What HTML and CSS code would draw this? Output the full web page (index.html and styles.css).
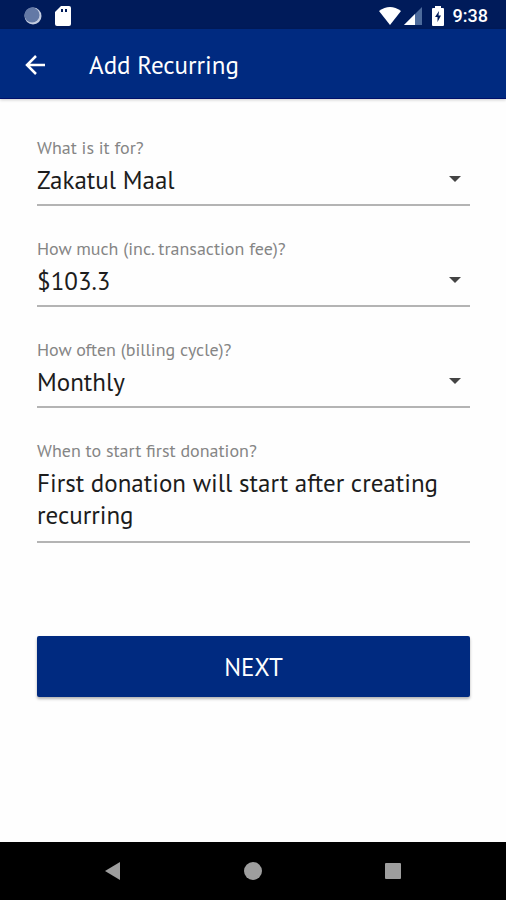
FILE: index.html
```
<!DOCTYPE html>
<html lang="en">
<head>
  <meta charset="UTF-8" />
  <meta name="viewport" content="width=device-width, initial-scale=1.0"/>
  <title>Add Recurring</title>
  <link rel="stylesheet" href="styles.css">
</head>
<body>
  <div class="status-bar">
    <svg width="18" height="18" viewBox="0 0 18 18">
      <circle cx="9" cy="9" r="8.5" fill="#c3cce0"/>
      <circle cx="8" cy="8" r="7.5" fill="#6379a6"/>
    </svg>
    <svg width="16" height="20" viewBox="0 0 16 20">
      <path d="M6 0h8a2 2 0 0 1 2 2v16a2 2 0 0 1-2 2H2a2 2 0 0 1-2-2V6z" fill="#fff"/>
      <path d="M6 3h2v3H6zM10 3h2v3h-2z" fill="#001b5a"/>
    </svg>
    <div class="status-right">
      <svg width="22" height="18" viewBox="0 0 22 18">
        <path d="M0 4Q11-4 22 4L11 18z" fill="#fff"/>
      </svg>
      <svg class="signal" width="18" height="18" viewBox="0 0 18 18">
        <path d="M18 0v18H0z" fill="#4d6b9c"/>
        <path d="M11 7v11H0z" fill="#fff"/>
      </svg>
      <svg class="battery" width="12" height="20" viewBox="0 0 12 20">
        <path d="M3 2V0h6v2h2a1 1 0 0 1 1 1v16a1 1 0 0 1-1 1H1a1 1 0 0 1-1-1V3a1 1 0 0 1 1-1z" fill="#fff"/>
        <path d="M7 5L3 11h2.5v5L9 9.5H6.500z" fill="#001b5a"/>
      </svg>
      <span class="clock">9:38</span>
    </div>
  </div>

  <header class="app-bar">
    <button class="back" type="button" aria-label="Back">
      <svg width="22" height="20" viewBox="0 0 22 20" fill="none" stroke="#fff" stroke-width="2.5">
        <path d="M20 10H3M11 1L2 10l9 9"/>
      </svg>
    </button>
    <h1>Add Recurring</h1>
  </header>

  <form class="form">
    <div class="field">
      <label for="purpose">What is it for?</label>
      <div class="select">
        <select id="purpose" name="purpose">
          <option>Zakatul Maal</option>
        </select>
      </div>
    </div>

    <div class="field">
      <label for="amount">How much (inc. transaction fee)?</label>
      <div class="select">
        <select id="amount" name="amount">
          <option>$103.3</option>
        </select>
      </div>
    </div>

    <div class="field">
      <label for="cycle">How often (billing cycle)?</label>
      <div class="select">
        <select id="cycle" name="cycle">
          <option>Monthly</option>
        </select>
      </div>
    </div>

    <div class="field">
      <label for="start">When to start first donation?</label>
      <textarea id="start" name="start" rows="2" readonly>First donation will start after creating recurring</textarea>
    </div>

    <button class="next" type="button">NEXT</button>
  </form>

  <nav class="nav-bar">
    <button type="button" aria-label="Back">
      <svg width="18" height="18" viewBox="0 0 18 18"><path d="M16 0v18L1 9z" fill="#9e9e9e"/></svg>
    </button>
    <button type="button" aria-label="Home">
      <svg width="18" height="18" viewBox="0 0 18 18"><circle cx="9" cy="9" r="9" fill="#9e9e9e"/></svg>
    </button>
    <button type="button" aria-label="Recent apps">
      <svg width="18" height="18" viewBox="0 0 18 18"><rect x="1" y="1" width="16" height="16" rx="1" fill="#9e9e9e"/></svg>
    </button>
  </nav>
</body>
</html>
```
FILE: styles.css
```
* {
  box-sizing: border-box;
}

body {
  margin: 0;
  min-height: 100vh;
  display: flex;
  flex-direction: column;
  background: #fefefe;
  color: #1c1c1c;
  font-family: "PT Sans", "Noto Sans", sans-serif;
}

svg {
  display: block;
}

button {
  border: none;
  padding: 0;
  background: none;
  font-family: inherit;
  cursor: pointer;
}

.status-bar {
  display: flex;
  align-items: center;
  gap: 13px;
  height: 29px;
  padding: 2px 18px 0 24px;
  background: #001b5a;
  color: #fff;
}

.status-right {
  display: flex;
  align-items: center;
  margin-left: auto;
}

.signal {
  margin-left: 3px;
}

.battery {
  margin: 0 9px 0 10px;
}

.clock {
  font-family: Roboto, sans-serif;
  font-size: 18px;
  font-weight: 500;
  line-height: 20px;
}

.app-bar {
  display: flex;
  align-items: center;
  gap: 42px;
  height: 70px;
  padding: 2px 25px 0;
  background: #002a80;
  border-bottom: 1px solid #00106a;
  box-shadow: 0 1px 3px rgba(0, 0, 0, 0.2);
}

h1 {
  margin: 0;
  color: #fff;
  font-size: 25px;
  font-weight: normal;
  line-height: 32px;
}

.form {
  flex: 1;
  display: flex;
  flex-direction: column;
  gap: 33px;
  padding: 39px 36px 33px 37px;
}

.field {
  display: flex;
  flex-direction: column;
  gap: 6px;
}

label {
  color: #858585;
  font-size: 18px;
  line-height: 20px;
}

.select {
  display: grid;
  align-items: center;
}

.select select,
.select::after {
  grid-area: 1 / 1;
}

.select::after {
  content: "";
  justify-self: end;
  margin: 0 9px 12px 0;
  border: 6px solid transparent;
  border-top-color: #444;
  border-bottom: none;
  pointer-events: none;
}

select,
textarea {
  appearance: none;
  display: block;
  width: 100%;
  margin: 0;
  padding: 0 0 8px;
  border: none;
  border-bottom: 2px solid #b4b4b4;
  border-radius: 0;
  outline: none;
  background: transparent;
  color: inherit;
  font-family: inherit;
  font-size: 25px;
  line-height: 32px;
}

textarea {
  padding-bottom: 10px;
  resize: none;
  overflow: hidden;
}

.next {
  height: 61px;
  margin-top: 60px;
  border-radius: 2px;
  background: #002a80;
  box-shadow: 0 2px 3px rgba(0, 0, 0, 0.3);
  color: #fff;
  font-size: 25px;
}

.nav-bar {
  display: flex;
  justify-content: center;
  align-items: center;
  gap: 122px;
  height: 58px;
  background: #000;
}
```
